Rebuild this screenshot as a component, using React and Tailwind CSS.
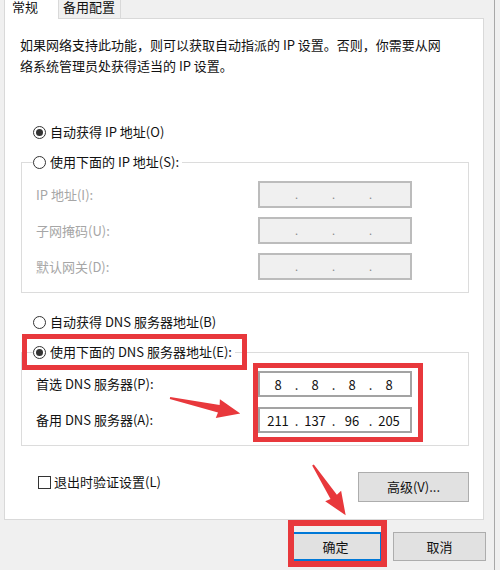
import React from "react";

const font = "font-['Noto_Sans_CJK_SC','Noto_Sans',sans-serif]";

function Radio({ checked }) {
  return (
    <span className="w-[13px] h-[13px] rounded-full border border-[#333] bg-white flex items-center justify-center shrink-0">
      {checked && <span className="w-[7px] h-[7px] rounded-full bg-[#333]" />}
    </span>
  );
}

function RadioRow({ checked, label, className = "" }) {
  return (
    <div className={`flex items-center h-[20px] gap-[4px] text-[13px] text-[#111] ${className}`}>
      <Radio checked={checked} />
      <span className="leading-[20px] whitespace-nowrap">{label}</span>
    </div>
  );
}

// IPv4 address field: four octet cells separated by dots
function IpField({ parts, disabled, height }) {
  const cells = [];
  parts.forEach((p, i) => {
    if (i > 0)
      cells.push(
        <span
          key={`d${i}`}
          className={`w-[9px] text-center ${disabled ? "text-[#8a8a8a] text-[11px]" : ""}`}
        >
          .
        </span>
      );
    cells.push(
      <span key={`p${i}`} className="w-[28px] text-center">
        {p}
      </span>
    );
  });
  return (
    <div
      className={`w-[154px] ${height} flex items-center pl-[4px] border-2 text-[13px] leading-none ${
        disabled ? "bg-[#f0f0f0] border-[#bcbcbc]" : "bg-white border-[#a3a3a3] text-[#111]"
      }`}
    >
      {cells}
    </div>
  );
}

function FieldRow({ label, disabled, parts, height }) {
  return (
    <div className={`flex items-center ${height}`}>
      <span
        className={`w-[236px] pl-[14px] text-[13px] whitespace-nowrap ${
          disabled ? "text-[#a6a6a6]" : "text-[#111]"
        }`}
      >
        {label}
      </span>
      <IpField parts={parts} disabled={disabled} height={height} />
    </div>
  );
}

function Arrow({ x, y, angle, len }) {
  const head = len - 22;
  return (
    <polygon
      points={`0,-1 ${head},-3.8 ${head - 1},-9.5 ${len},0 ${head - 1},9.5 ${head},3.8 0,1`}
      fill="#e8383c"
      transform={`translate(${x} ${y}) rotate(${angle})`}
    />
  );
}

export default function App() {
  return (
    <div className={`w-[500px] h-[570px] bg-[#f0f0f0] relative overflow-hidden ${font}`}>
      <div className="w-[495px] h-full border-r border-[#a8a8a8]">
        {/* tab strip */}
        <div className="flex ml-[4px] w-[480px] h-[19px]">
          <div className="w-[55px] h-full bg-white border-l border-r border-[#d9d9d9] pl-[7px] text-[13px] leading-[14px] text-[#111]">
            常规
          </div>
          <div className="w-[62px] h-full bg-[#f0f0f0] border-r border-b border-[#d9d9d9] pl-[4px] text-[13px] leading-[14px] text-[#111]">
            备用配置
          </div>
          <div className="flex-1 h-full border-b border-[#d9d9d9]" />
        </div>

        {/* tab page */}
        <div className="ml-[4px] w-[480px] h-[501px] bg-white border-l border-r border-b border-[#d9d9d9] flex flex-col">
          <p className="mt-[15px] ml-[15px] text-[13px] leading-[21px] text-[#111]">
            如果网络支持此功能，则可以获取自动指派的 IP 设置。否则，你需要从网
            <br />
            络系统管理员处获得适当的 IP 设置。
          </p>

          <RadioRow checked label="自动获得 IP 地址(O)" className="mt-[46px] ml-[28px]" />

          <div className="mt-[20px] ml-[16px] w-[448px] border border-[#dcdcdc] pb-[12px]">
            <div className="-mt-[11px] ml-[11px] w-fit bg-white pr-[3px]">
              <RadioRow label="使用下面的 IP 地址(S):" />
            </div>
            <div className="mt-[9px] flex flex-col gap-[9px]">
              <FieldRow disabled label="IP 地址(I):" parts={["", "", "", ""]} height="h-[27px]" />
              <FieldRow disabled label="子网掩码(U):" parts={["", "", "", ""]} height="h-[27px]" />
              <FieldRow disabled label="默认网关(D):" parts={["", "", "", ""]} height="h-[27px]" />
            </div>
          </div>

          <RadioRow label="自动获得 DNS 服务器地址(B)" className="mt-[19px] ml-[28px]" />

          <div className="mt-[20px] ml-[16px] w-[448px] border border-[#dcdcdc] pb-[12px]">
            <div className="-mt-[11px] ml-[11px] w-fit bg-white pr-[3px]">
              <RadioRow checked label="使用下面的 DNS 服务器地址(E):" />
            </div>
            <div className="mt-[9px] flex flex-col gap-[10px]">
              <FieldRow label="首选 DNS 服务器(P):" parts={["8", "8", "8", "8"]} height="h-[26px]" />
              <FieldRow label="备用 DNS 服务器(A):" parts={["211", "137", "96", "205"]} height="h-[26px]" />
            </div>
          </div>

          <div className="mt-[26px] flex items-start justify-between pl-[33px] pr-[14px]">
            <div className="flex items-center h-[20px] gap-[3px] text-[13px] text-[#111]">
              <span className="w-[13px] h-[13px] border border-[#333] bg-white shrink-0" />
              <span className="whitespace-nowrap">退出时验证设置(L)</span>
            </div>
            <button className="w-[111px] h-[30px] bg-[#e1e1e1] border border-[#adadad] text-[13px] text-[#111]">
              高级(V)...
            </button>
          </div>
        </div>

        {/* dialog buttons */}
        <div className="mt-[12px] flex justify-end gap-[11px] pr-[8px]">
          <button className="w-[93px] h-[29px] bg-[#e1e1e1] border-2 border-[#0078d7] text-[13px] text-[#111]">
            确定
          </button>
          <button className="w-[93px] h-[29px] bg-[#e1e1e1] border border-[#adadad] text-[13px] text-[#111]">
            取消
          </button>
        </div>
      </div>

      {/* red highlight annotations */}
      <div className="absolute left-[22px] top-[334px] w-[225px] h-[36px] border-[5px] border-[#e8383c] pointer-events-none" />
      <div className="absolute left-[253px] top-[363px] w-[170px] h-[79px] border-[5px] border-[#e8383c] pointer-events-none" />
      <div className="absolute left-[288px] top-[520px] w-[99px] h-[47px] border-[6px] border-[#e8383c] pointer-events-none" />
      <svg className="absolute left-0 top-0 pointer-events-none" width="500" height="570">
        <Arrow x={170} y={398} angle={12.5} len={72} />
        <Arrow x={313} y={465} angle={57} len={60} />
      </svg>
    </div>
  );
}
